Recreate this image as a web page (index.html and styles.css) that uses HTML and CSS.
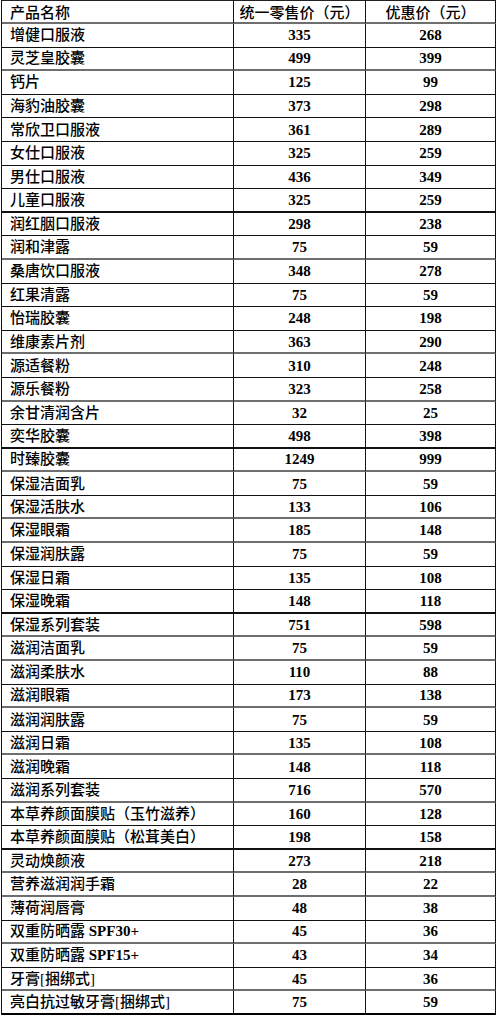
FILE: index.html
```html
<!DOCTYPE html>
<html lang="zh">
<head>
<meta charset="utf-8">
<title>产品价格表</title>
<link rel="stylesheet" href="styles.css">
</head>
<body>
<table class="price">
<colgroup><col class="c1"><col class="c2"><col class="c3"></colgroup>
<thead>
<tr class="head g"><th class="name">产品名称</th><th>统一零售价（元）</th><th>优惠价（元）</th></tr>
</thead>
<tbody>
<tr><td class="name">增健口服液</td><td>335</td><td>268</td></tr>
<tr class="g"><td class="name">灵芝皇胶囊</td><td>499</td><td>399</td></tr>
<tr><td class="name">钙片</td><td>125</td><td>99</td></tr>
<tr><td class="name">海豹油胶囊</td><td>373</td><td>298</td></tr>
<tr><td class="name">常欣卫口服液</td><td>361</td><td>289</td></tr>
<tr><td class="name">女仕口服液</td><td>325</td><td>259</td></tr>
<tr><td class="name">男仕口服液</td><td>436</td><td>349</td></tr>
<tr class="k"><td class="name">儿童口服液</td><td>325</td><td>259</td></tr>
<tr><td class="name">润红胭口服液</td><td>298</td><td>238</td></tr>
<tr class="g"><td class="name">润和津露</td><td>75</td><td>59</td></tr>
<tr><td class="name">桑唐饮口服液</td><td>348</td><td>278</td></tr>
<tr><td class="name">红果清露</td><td>75</td><td>59</td></tr>
<tr><td class="name">怡瑞胶囊</td><td>248</td><td>198</td></tr>
<tr class="g"><td class="name">维康素片剂</td><td>363</td><td>290</td></tr>
<tr><td class="name">源适餐粉</td><td>310</td><td>248</td></tr>
<tr class="g"><td class="name">源乐餐粉</td><td>323</td><td>258</td></tr>
<tr><td class="name">余甘清润含片</td><td>32</td><td>25</td></tr>
<tr class="k"><td class="name">奕华胶囊</td><td>498</td><td>398</td></tr>
<tr class="g"><td class="name">时臻胶囊</td><td>1249</td><td>999</td></tr>
<tr><td class="name">保湿洁面乳</td><td>75</td><td>59</td></tr>
<tr class="g"><td class="name">保湿活肤水</td><td>133</td><td>106</td></tr>
<tr class="g"><td class="name">保湿眼霜</td><td>185</td><td>148</td></tr>
<tr><td class="name">保湿润肤露</td><td>75</td><td>59</td></tr>
<tr><td class="name">保湿日霜</td><td>135</td><td>108</td></tr>
<tr class="k"><td class="name">保湿晚霜</td><td>148</td><td>118</td></tr>
<tr class="g"><td class="name">保湿系列套装</td><td>751</td><td>598</td></tr>
<tr class="g"><td class="name">滋润洁面乳</td><td>75</td><td>59</td></tr>
<tr><td class="name">滋润柔肤水</td><td>110</td><td>88</td></tr>
<tr class="g"><td class="name">滋润眼霜</td><td>173</td><td>138</td></tr>
<tr><td class="name">滋润润肤露</td><td>75</td><td>59</td></tr>
<tr class="g"><td class="name">滋润日霜</td><td>135</td><td>108</td></tr>
<tr><td class="name">滋润晚霜</td><td>148</td><td>118</td></tr>
<tr class="g"><td class="name">滋润系列套装</td><td>716</td><td>570</td></tr>
<tr><td class="name">本草养颜面膜贴（玉竹滋养）</td><td>160</td><td>128</td></tr>
<tr class="k"><td class="name">本草养颜面膜贴（松茸美白）</td><td>198</td><td>158</td></tr>
<tr class="g"><td class="name">灵动焕颜液</td><td>273</td><td>218</td></tr>
<tr class="g"><td class="name">营养滋润润手霜</td><td>28</td><td>22</td></tr>
<tr><td class="name">薄荷润唇膏</td><td>48</td><td>38</td></tr>
<tr class="g"><td class="name">双重防晒露 <b>SPF30+</b></td><td>45</td><td>36</td></tr>
<tr><td class="name">双重防晒露 <b>SPF15+</b></td><td>43</td><td>34</td></tr>
<tr class="g"><td class="name">牙膏[捆绑式]</td><td>45</td><td>36</td></tr>
<tr class="last"><td class="name">亮白抗过敏牙膏[捆绑式]</td><td>75</td><td>59</td></tr>
</tbody>
</table>
</body>
</html>
```
FILE: styles.css
```css
html, body {
  margin: 0;
  padding: 0;
  background: #fff;
}

.price {
  margin-left: 1px;
  width: 495px;
  table-layout: fixed;
  border-collapse: separate;
  border-spacing: 0;
  border-top: 1px solid #222;
  border-left: 1px solid #111;
  font-family: "Liberation Serif", "Noto Sans CJK SC", serif;
  font-size: 15px;
  color: #000;
}

.c1 { width: 232px; }
.c2 { width: 132px; }
.c3 { width: 130px; }

.price th,
.price td {
  padding: 0;
  border-right: 1px solid #111;
  border-bottom: 1px solid #111;
  text-align: center;
  vertical-align: middle;
  line-height: 18px;
  white-space: nowrap;
  overflow: hidden;
}

.price tr {
  height: 23.6px;
}

.price tr.head {
  height: 23px;
}

.price th {
  font-weight: 500;
  font-family: "Noto Sans CJK SC", "Liberation Serif", sans-serif;
}

.price td {
  font-weight: bold;
}

.price .name {
  text-align: left;
  padding-left: 8px;
  font-weight: 500;
}

.price td.name {
  font-family: "Liberation Serif", "Noto Sans CJK SC", serif;
}

.price .name b {
  font-weight: bold;
}

.price tr.g th,
.price tr.g td {
  border-bottom: 2px solid #6e6e6e;
}

.price tr.k td {
  border-bottom: 2px solid #111;
}

.price tr.last td {
  border-bottom: 2px solid #000;
}
```
